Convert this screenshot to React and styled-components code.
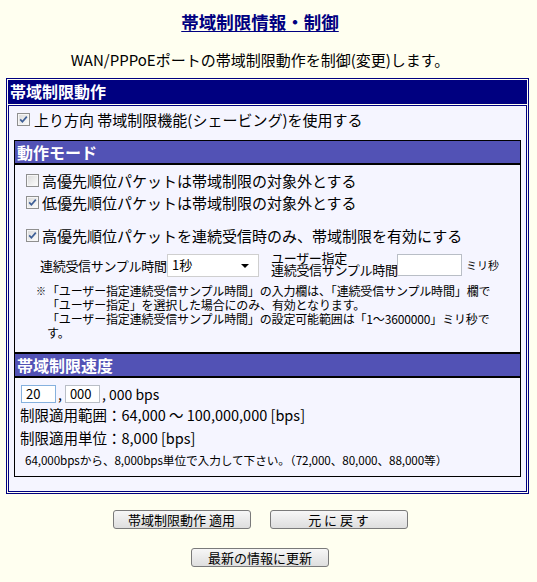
import styled, { createGlobalStyle } from "styled-components";

const GlobalStyle = createGlobalStyle`
  body {
    margin: 0;
    background: #fffff0;
    font-family: "Noto Sans CJK JP", "Noto Sans", sans-serif;
    color: #000;
  }
`;

const Check = ({ checked }) => (
  <CheckBox>
    <svg width="13" height="13" viewBox="0 0 13 13">
      <defs>
        <linearGradient id="cbg" x1="0" y1="0" x2="1" y2="1">
          <stop offset="0" stopColor="#dcdcdc" />
          <stop offset="1" stopColor="#fbfbfb" />
        </linearGradient>
      </defs>
      <rect x="0.5" y="0.5" width="12" height="12" fill="#f6f6f6" stroke="#8f8f8f" />
      <rect x="2" y="2" width="9" height="9" fill="url(#cbg)" />
      {checked && (
        <path d="M3.2 6.4 L5.4 8.8 L9.8 3.6" fill="none" stroke="#3e5f96" strokeWidth="1.7" />
      )}
    </svg>
  </CheckBox>
);

const App = () => {
  return (
    <Page>
      <GlobalStyle />
      <Center>
        <Title>帯域制限情報・制御</Title>
        <Lead>WAN/PPPoEポートの帯域制限動作を制御(変更)します。</Lead>
      </Center>

      <Frame>
        <HeadCell>帯域制限動作</HeadCell>
        <BodyCell>
          <TopOption>
            <Check checked />
            <span>上り方向 帯域制限機能(シェービング)を使用する</span>
          </TopOption>

          <Inner>
            <SubHead>動作モード</SubHead>
            <Option>
              <Check />
              <span>高優先順位パケットは帯域制限の対象外とする</span>
            </Option>
            <Option>
              <Check checked />
              <span>低優先順位パケットは帯域制限の対象外とする</span>
            </Option>
            <Option $gap={11}>
              <Check checked />
              <span>高優先順位パケットを連続受信時のみ、帯域制限を有効にする</span>
            </Option>

            <SampleRow>
              <SampleLabel>連続受信サンプル時間</SampleLabel>
              <SelectBox>
                <span>1秒</span>
                <Arrow />
              </SelectBox>
              <UserLabel>
                ユーザー指定
                <br />
                連続受信サンプル時間
              </UserLabel>
              <TextField $w={65} />
              <Unit>ミリ秒</Unit>
            </SampleRow>

            <Note>
              <Mark>※</Mark>
              <NoteText>
                「ユーザー指定連続受信サンプル時間」の入力欄は、「連続受信サンプル時間」欄で
                <br />
                「ユーザー指定」を選択した場合にのみ、有効となります。
                <br />
                「ユーザー指定連続受信サンプル時間」の設定可能範囲は「1〜3600000」ミリ秒で
                <br />
                す。
              </NoteText>
            </Note>

            <SubHead $top>帯域制限速度</SubHead>
            <SpeedRow>
              <TextField $w={35} $focus defaultValue="20" />
              <Comma>,</Comma>
              <TextField $w={35} defaultValue="000" />
              <Comma>, 000 bps</Comma>
            </SpeedRow>
            <InfoLine>制限適用範囲：64,000 ～ 100,000,000 [bps]</InfoLine>
            <InfoLine>制限適用単位：8,000 [bps]</InfoLine>
            <SmallNote>64,000bpsから、8,000bps単位で入力して下さい。（72,000、80,000、88,000等）</SmallNote>
          </Inner>
        </BodyCell>
      </Frame>

      <Buttons>
        <ButtonRow>
          <Button>帯域制限動作 適用</Button>
          <Button>元 に 戻 す</Button>
        </ButtonRow>
        <ButtonRow>
          <Button>最新の情報に更新</Button>
        </ButtonRow>
      </Buttons>
    </Page>
  );
};

const Page = styled.div`
  width: 537px;
  padding-top: 11px;
`;

const Center = styled.div`
  width: 520px;
  text-align: center;
`;

const Title = styled.h1`
  margin: 0;
  font-size: 17.5px;
  line-height: 22px;
  font-weight: bold;
  color: #000080;
  text-decoration: underline;
  text-underline-offset: 2px;
`;

const Lead = styled.p`
  margin: 17px 0 0;
  font-size: 15px;
  line-height: 19px;
`;

const Frame = styled.div`
  box-sizing: border-box;
  margin: 9px 0 0 6px;
  width: 523px;
  border: 1px solid #000080;
  padding: 1px;
  display: flex;
  flex-direction: column;
  gap: 1px;
`;

const HeadCell = styled.div`
  box-sizing: border-box;
  height: 24px;
  background: #000080;
  color: #fff;
  font-size: 16px;
  font-weight: bold;
  line-height: 23px;
  padding-left: 2px;
`;

const BodyCell = styled.div`
  border: 1px solid #000080;
  background: #f5f5ff;
  padding: 2px 0 14px 5px;
`;

const CheckBox = styled.span`
  display: inline-flex;
  width: 13px;
  height: 13px;
  flex: none;
`;

const TopOption = styled.label`
  display: flex;
  align-items: center;
  gap: 4px;
  height: 22px;
  padding-left: 3px;
  font-size: 15px;
`;

const Inner = styled.div`
  margin-top: 10px;
  width: 507px;
  box-sizing: border-box;
  border: 1px solid #000;
  padding-bottom: 5px;
`;

const SubHead = styled.div`
  height: 22px;
  background: #5252b5;
  color: #fff;
  font-size: 16px;
  font-weight: bold;
  line-height: 22px;
  padding-left: 2px;
  border-bottom: 2px solid #000;
  border-top: ${(p) => (p.$top ? "2px solid #000" : "none")};
  margin-top: ${(p) => (p.$top ? "12px" : "0")};
`;

const Option = styled.label`
  display: flex;
  align-items: center;
  gap: 3px;
  height: 22px;
  padding-left: 11px;
  margin-top: ${(p) => p.$gap ?? 0}px;
  font-size: 15px;
  &:first-of-type {
    margin-top: 4px;
  }
`;

const SampleRow = styled.div`
  display: flex;
  align-items: center;
  height: 24px;
  margin-top: 7px;
  padding-left: 25px;
  font-size: 13px;
`;

const SampleLabel = styled.span`
  width: 127px;
  white-space: nowrap;
  letter-spacing: -0.3px;
`;

const SelectBox = styled.div`
  position: relative;
  box-sizing: border-box;
  width: 92px;
  height: 23px;
  background: #fff;
  border: 1px solid #cfcfcf;
  padding-left: 4px;
  line-height: 19px;
  font-size: 13px;
`;

const Arrow = styled.span`
  position: absolute;
  right: 9px;
  top: 9px;
  border-left: 4px solid transparent;
  border-right: 4px solid transparent;
  border-top: 4px solid #000;
`;

const UserLabel = styled.span`
  width: 126px;
  margin-left: 12px;
  font-size: 13px;
  line-height: 12px;
  white-space: nowrap;
  letter-spacing: -0.3px;
  align-self: flex-end;
  padding-bottom: 1px;
`;

const TextField = styled.input`
  box-sizing: border-box;
  width: ${(p) => p.$w}px;
  height: ${(p) => (p.$w > 50 ? 22 : 18)}px;
  border: 1px solid ${(p) => (p.$focus ? "#86b1de" : "#b9bec6")};
  background: #fff;
  padding: 0 4px;
  font-family: inherit;
  font-size: 13px;
  outline: none;
`;

const Unit = styled.span`
  margin-left: 4px;
  font-size: 11px;
`;

const Note = styled.div`
  display: flex;
  margin-top: 7px;
  padding-left: 21px;
  font-size: 12px;
  line-height: 14px;
`;

const Mark = styled.span`
  width: 11px;
  flex: none;
  font-size: 10px;
  white-space: nowrap;
`;

const NoteText = styled.div`
  white-space: nowrap;
  letter-spacing: -0.15px;
`;

const SpeedRow = styled.div`
  display: flex;
  align-items: center;
  margin-top: 6px;
  padding-left: 6px;
  font-size: 14px;
  height: 19px;
`;

const Comma = styled.span`
  margin: 0 3px 0 2px;
  white-space: pre;
`;

const InfoLine = styled.div`
  padding-left: 5px;
  font-size: 14.5px;
  line-height: 23px;
`;

const SmallNote = styled.div`
  padding-left: 10px;
  font-size: 11.7px;
  line-height: 22px;
  letter-spacing: -0.1px;
`;

const Buttons = styled.div`
  width: 520px;
  margin-top: 16px;
  display: flex;
  flex-direction: column;
  align-items: center;
  gap: 19px;
`;

const ButtonRow = styled.div`
  display: flex;
  gap: 19px;
`;

const Button = styled.button`
  box-sizing: border-box;
  width: 138px;
  height: 19px;
  padding: 0;
  border: 1px solid #7a7a7a;
  border-radius: 3px;
  background: linear-gradient(#f7f7f7, #dedede);
  font-family: inherit;
  font-size: 13px;
  line-height: 17px;
  color: #000;
`;

export default App;
